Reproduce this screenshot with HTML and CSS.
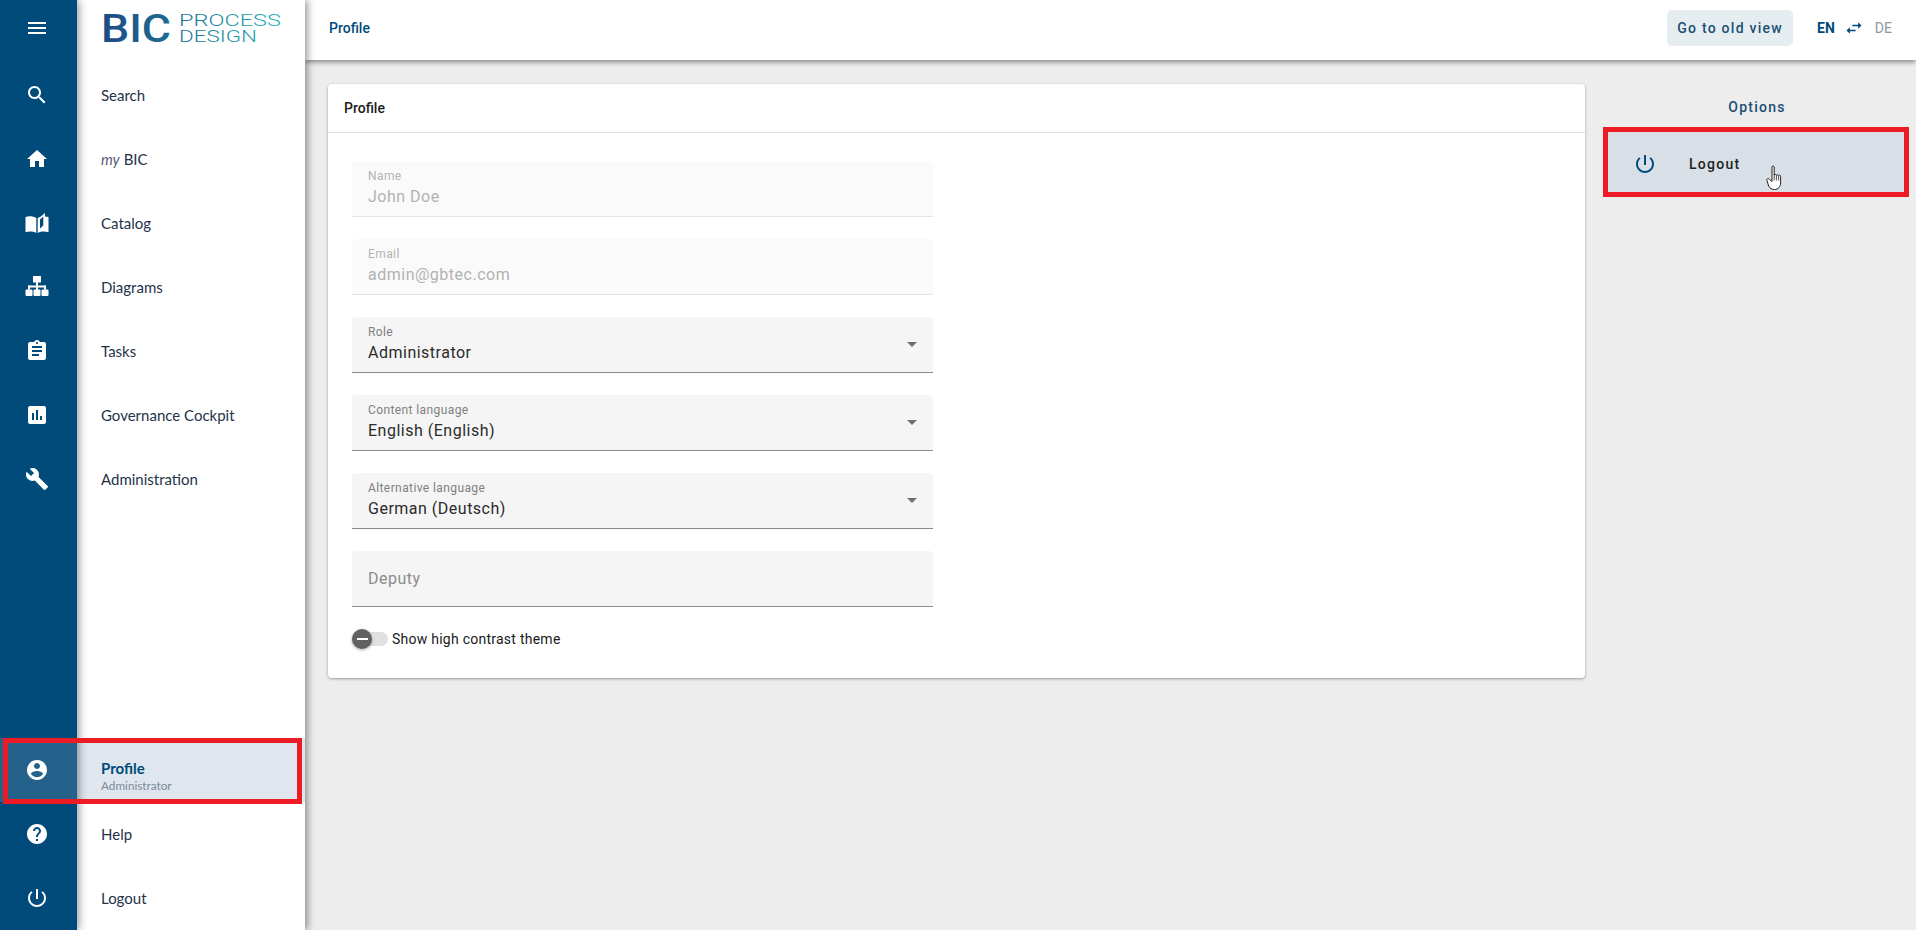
FILE: index.html
```html
<!DOCTYPE html>
<html lang="en">
<head>
<meta charset="utf-8">
<title>Profile</title>
<link rel="stylesheet" href="styles.css">
</head>
<body>
<div class="app">
  <aside class="sidebar">
    <nav class="rail">
      <div class="rail-top"><svg class="ico" viewBox="0 0 24 24"><path d="M3 18h18v-2H3v2zm0-5h18v-2H3v2zm0-7v2h18V6H3z"/></svg></div>
      <div class="rail-cell"><svg class="ico" viewBox="0 0 24 24"><path d="M15.500 14h-.79l-.28-.27C15.410 12.590 16 11.110 16 9.500 16 5.910 13.090 3 9.500 3S3 5.910 3 9.500 5.910 16 9.500 16c1.610 0 3.090-.59 4.230-1.570l.27.28v.79l5 4.990L20.490 19l-4.990-5zm-6 0C7.010 14 5 11.990 5 9.500S7.010 5 9.500 5 14 7.010 14 9.500 11.990 14 9.500 14z"/></svg></div>
      <div class="rail-cell"><svg class="ico" viewBox="0 0 24 24"><path d="M10 20v-6h4v6h5v-8h3L12 3 2 12h3v8z"/></svg></div>
      <div class="rail-cell"><svg class="ico" viewBox="0 0 24 24"><path d="M0.500 6C3.500 5 8 5 11.300 7V22C8 20.300 3.500 20.300 0.500 21.300V6Z"/><path fill-rule="evenodd" d="M12.700 7C13.500 6.400 14.800 6 15.500 5.700L20 2V5.400C21.200 5.400 22.300 5.600 23.500 6V21.300C20 20.300 16 20.300 12.700 22V7ZM15 17.500L18.300 14.500V5.500L15 8.500V17.500Z"/></svg></div>
      <div class="rail-cell"><svg class="ico" viewBox="0 0 24 24"><rect x="8" y="1" width="8" height="6.500" rx=".5"/><rect x="11" y="7" width="2" height="8"/><rect x="3" y="10.500" width="18" height="2"/><rect x="3" y="10.500" width="2" height="4"/><rect x="19" y="10.500" width="2" height="4"/><rect x="0.500" y="14.500" width="7" height="6.500" rx="1"/><rect x="8.500" y="14.500" width="7" height="6.500" rx="1"/><rect x="16.500" y="14.500" width="7" height="6.500" rx="1"/></svg></div>
      <div class="rail-cell"><svg class="ico" viewBox="0 0 24 24"><path d="M19 3h-4.180C14.400 1.840 13.300 1 12 1c-1.300 0-2.400.84-2.820 2H5c-1.100 0-2 .9-2 2v14c0 1.100.9 2 2 2h14c1.100 0 2-.9 2-2V5c0-1.100-.9-2-2-2zm-7 0c.55 0 1 .45 1 1s-.45 1-1 1-1-.45-1-1 .45-1 1-1zm2 14H7v-2h7v2zm3-4H7v-2h10v2zm0-4H7V7h10v2z"/></svg></div>
      <div class="rail-cell"><svg class="ico" viewBox="0 0 24 24"><path d="M19 3H5c-1.100 0-2 .9-2 2v14c0 1.100.9 2 2 2h14c1.100 0 2-.9 2-2V5c0-1.100-.9-2-2-2zM9 17H7v-7h2v7zm4 0h-2V7h2v10zm4 0h-2v-4h2v4z"/></svg></div>
      <div class="rail-cell"><svg class="ico" viewBox="0 0 24 24"><path d="M22.700 19l-9.100-9.100c.9-2.300.4-5-1.500-6.900-2-2-5-2.400-7.400-1.300L9 6 6 9 1.600 4.700C.4 7.100.9 10.100 2.900 12.100c1.900 1.900 4.600 2.400 6.900 1.500l9.100 9.100c.4.4 1 .4 1.400 0l2.300-2.300c.5-.4.5-1.100.1-1.400z"/></svg></div>
      <div class="grow"></div>
      <div class="rail-cell is-active"><svg class="ico" viewBox="0 0 24 24"><path d="M12 2C6.480 2 2 6.480 2 12s4.480 10 10 10 10-4.480 10-10S17.520 2 12 2zm0 3c1.660 0 3 1.340 3 3s-1.340 3-3 3-3-1.340-3-3 1.340-3 3-3zm0 14.200c-2.500 0-4.710-1.280-6-3.220.03-1.990 4-3.080 6-3.080 1.990 0 5.970 1.090 6 3.080-1.290 1.940-3.500 3.220-6 3.220z"/></svg></div>
      <div class="rail-cell"><svg class="ico" viewBox="0 0 24 24"><path d="M12 2C6.480 2 2 6.480 2 12s4.480 10 10 10 10-4.480 10-10S17.520 2 12 2zm1 17h-2v-2h2v2zm2.070-7.750l-.9.92C13.450 12.900 13 13.500 13 15h-2v-.5c0-1.100.45-2.100 1.170-2.830l1.240-1.260c.37-.36.59-.86.59-1.410 0-1.100-.9-2-2-2s-2 .9-2 2H8c0-2.210 1.790-4 4-4s4 1.790 4 4c0 .88-.36 1.680-.93 2.250z"/></svg></div>
      <div class="rail-cell"><svg class="ico" viewBox="0 0 24 24"><path d="M13 3h-2v10h2V3zm4.830 2.170l-1.420 1.420C17.990 7.860 19 9.810 19 12c0 3.870-3.130 7-7 7s-7-3.130-7-7c0-2.190 1.010-4.140 2.580-5.420L6.170 5.170C4.230 6.820 3 9.260 3 12c0 4.970 4.030 9 9 9s9-4.030 9-9c0-2.740-1.230-5.180-3.170-6.830z"/></svg></div>
    </nav>
    <nav class="panel">
      <div class="brand">
        <svg class="logo" viewBox="0 0 190 46" role="img" aria-label="BIC Process Design">
          <defs>
            <linearGradient id="lg" gradientUnits="userSpaceOnUse" x1="0" y1="0" x2="180" y2="0">
              <stop offset="0" stop-color="#1d4a85"/>
              <stop offset=".4" stop-color="#1b6e93"/>
              <stop offset="1" stop-color="#1fb2b4"/>
            </linearGradient>
          </defs>
          <text x="0" y="36" class="logo-big" fill="url(#lg)" textLength="70" lengthAdjust="spacingAndGlyphs">BIC</text>
          <text x="78" y="20" class="logo-small" fill="url(#lg)" textLength="102" lengthAdjust="spacingAndGlyphs">PROCESS</text>
          <text x="78" y="36" class="logo-small" fill="url(#lg)" textLength="78" lengthAdjust="spacingAndGlyphs">DESIGN</text>
        </svg>
      </div>
      <a class="item">Search</a>
      <a class="item item-my"><i class="my">my</i>&nbsp;BIC</a>
      <a class="item">Catalog</a>
      <a class="item">Diagrams</a>
      <a class="item">Tasks</a>
      <a class="item">Governance Cockpit</a>
      <a class="item">Administration</a>
      <div class="grow"></div>
      <a class="item is-active"><span class="item-title">Profile</span><span class="item-sub">Administrator</span></a>
      <a class="item">Help</a>
      <a class="item">Logout</a>
    </nav>
    <div class="mark mark-profile"></div>
  </aside>

  <div class="content">
    <header class="topbar">
      <div class="crumb">Profile</div>
      <div class="top-actions">
        <button class="old-view">Go to old view</button>
        <div class="lang">
          <span class="lang-on">EN</span>
          <svg class="swap" viewBox="0 0 24 24"><path d="M6.990 11L3 15l3.990 4v-3H14v-2H6.990v-3zM21 9l-3.990-4v3H10v2h7.010v3L21 9z"/></svg>
          <span class="lang-off">DE</span>
        </div>
      </div>
    </header>

    <main class="main">
      <section class="card">
        <h2 class="card-head">Profile</h2>
        <form class="form">
          <div class="field is-disabled"><span class="f-label">Name</span><span class="f-value">John Doe</span></div>
          <div class="field is-disabled"><span class="f-label">Email</span><span class="f-value">admin@gbtec.com</span></div>
          <div class="field"><span class="f-label">Role</span><span class="f-value">Administrator</span><svg class="caret" viewBox="0 0 10 5"><path d="M0 0l5 5 5-5z"/></svg></div>
          <div class="field"><span class="f-label">Content language</span><span class="f-value">English (English)</span><svg class="caret" viewBox="0 0 10 5"><path d="M0 0l5 5 5-5z"/></svg></div>
          <div class="field"><span class="f-label">Alternative language</span><span class="f-value">German (Deutsch)</span><svg class="caret" viewBox="0 0 10 5"><path d="M0 0l5 5 5-5z"/></svg></div>
          <div class="field is-empty"><span class="f-placeholder">Deputy</span></div>
          <div class="toggle-row">
            <span class="toggle"><span class="thumb"><span class="thumb-bar"></span></span></span>
            <span class="toggle-label">Show high contrast theme</span>
          </div>
        </form>
      </section>

      <aside class="options">
        <div class="options-title">Options</div>
        <div class="option">
          <svg class="opt-ico" viewBox="0 0 24 24"><path d="M13 3h-2v10h2V3zm4.830 2.170l-1.420 1.420C17.990 7.860 19 9.810 19 12c0 3.870-3.130 7-7 7s-7-3.130-7-7c0-2.190 1.010-4.140 2.580-5.420L6.170 5.170C4.230 6.820 3 9.260 3 12c0 4.970 4.030 9 9 9s9-4.030 9-9c0-2.740-1.230-5.180-3.170-6.830z"/></svg>
          <span class="opt-label">Logout</span>
          <svg class="cursor" viewBox="0 0 18 25"><path d="M6 2c0-1.300 2.200-1.300 2.200 0v8c.4-.8 2-.8 2.200.2.400-.8 2-.6 2.200.4.500-.7 2-.4 2 .7V18c0 3.500-2.500 6.500-6 6.500-3 0-4.700-1.200-6-3.500L1 15.500c-.8-1.500 1-2.700 2.200-1.400L6 16.500z" fill="#fff" stroke="#222" stroke-width="1"/><path d="M8.200 9.500v6M10.400 10v5.500M12.600 10.500v5" stroke="#222" stroke-width=".8" fill="none"/></svg>
        </div>
      </aside>
    </main>
  </div>
</div>
</body>
</html>
```

FILE: styles.css
```css
* { box-sizing: border-box; }
html, body { margin: 0; height: 100%; }
body { font-family: Roboto, "Liberation Sans", sans-serif; background: #ededed; overflow: hidden; }
.app { display: flex; height: 930px; }
.grow { flex: 1; }

.sidebar { position: relative; z-index: 3; display: flex; width: 305px; flex: none; box-shadow: 2px 0 8px rgba(0,0,0,.45); }
.rail { position: relative; z-index: 2; display: flex; flex-direction: column; width: 77px; flex: none; background: #004b7a; box-shadow: 2px 0 8px rgba(0,0,0,.4); }
.rail-top { display: flex; align-items: center; justify-content: center; height: 63px; padding: 0 3px 7px 0; }
.rail-cell { display: flex; align-items: center; justify-content: center; height: 64px; padding-right: 3px; }
.rail-cell.is-active { background: #24618b; }
.ico { width: 24px; height: 24px; fill: #fff; display: block; }

.panel { display: flex; flex-direction: column; flex: 1; background: #fff; }
.brand { height: 63px; padding: 6px 0 0 24px; }
.logo { display: block; width: 190px; height: 46px; }
.logo-big { font-family: Roboto, sans-serif; font-weight: 500; font-size: 39px; }
.logo-small { font-family: Roboto, sans-serif; font-weight: 300; font-size: 16.500px; }
.item { display: flex; flex-direction: column; justify-content: center; height: 64px; padding-left: 24px; font-family: Lato, sans-serif; font-size: 15px; color: #26324a; }
.item-my { flex-direction: row; justify-content: flex-start; align-items: center; }
.my { color: #555f73; }
.item.is-active { padding-top: 12px; background: #dfe6ed; }
.item-title { font-weight: 700; color: #004b7a; line-height: 19px; }
.item-sub { font-size: 11.750px; color: #7b8a99; line-height: 15px; }

.mark { border: 5px solid #ed1c24; }
.mark-profile { position: absolute; left: 3px; bottom: 126px; width: 299px; height: 66px; z-index: 3; }

.content { flex: 1; display: flex; flex-direction: column; min-width: 0; }
.topbar { position: relative; z-index: 2; display: flex; align-items: center; justify-content: space-between; height: 60px; padding: 0 24px 4px; background: #fff; box-shadow: 0 2px 5px rgba(0,0,0,.45); flex: none; }
.crumb { font-size: 14px; font-weight: 500; color: #004b7a; }
.top-actions { display: flex; align-items: center; }
.old-view { width: 126px; height: 36px; border: 0; border-radius: 5px; background: #e6edf1; font: 500 14px Roboto, sans-serif; letter-spacing: 1.250px; color: #1b4f74; padding: 0; }
.lang { display: flex; align-items: center; margin-left: 24px; font-size: 14px; }
.lang-on { font-weight: 700; color: #004b7a; }
.swap { width: 20px; height: 20px; fill: #004b7a; margin-left: 9px; }
.lang-off { margin-left: 11px; color: #8d99a5; }

.main { display: flex; align-items: flex-start; padding: 24px 7px 0 23px; }
.card { flex: 1; height: 594px; background: #fff; border-radius: 4px; box-shadow: 0 1px 3px rgba(0,0,0,.35); }
.card-head { margin: 0; height: 49px; padding: 0 16px; border-bottom: 1px solid #e2e2e2; font-size: 14px; font-weight: 500; line-height: 48px; color: #1c1c1c; }
.form { display: flex; flex-direction: column; gap: 22px; padding: 28px 24px 0; }
.field { position: relative; display: flex; flex-direction: column; width: 581px; height: 56px; padding: 7px 16px 0; background: #f5f5f5; border-bottom: 1px solid #8a8a8a; border-radius: 4px 4px 0 0; }
.f-label { font-size: 12px; line-height: 16px; letter-spacing: .4px; color: #7f7f7f; }
.f-value { margin-top: 1px; font-size: 16px; line-height: 24px; letter-spacing: .5px; color: #2b2b2b; }
.field.is-disabled { background: #fafafa; border-bottom-color: #e4e4e4; }
.is-disabled .f-label, .is-disabled .f-value { color: #b2b2b2; }
.is-empty { justify-content: center; padding: 0 16px; }
.f-placeholder { font-size: 16px; letter-spacing: .5px; color: #8c8c8c; }
.caret { position: absolute; right: 16px; top: 25px; width: 10px; height: 5px; fill: #6f6f6f; }
.toggle-row { display: flex; align-items: center; height: 20px; }
.toggle { display: flex; align-items: center; width: 36px; height: 14px; border-radius: 7px; background: #e0e0e0; }
.thumb { display: flex; align-items: center; justify-content: center; width: 20px; height: 20px; flex: none; border-radius: 50%; background: #616161; box-shadow: 0 1px 3px rgba(0,0,0,.35); }
.thumb-bar { width: 11px; height: 2px; background: #fff; }
.toggle-label { margin-left: 4px; font-size: 14px; letter-spacing: .25px; color: #1a1a1a; }

.options { width: 306px; margin-left: 18px; flex: none; }
.options-title { height: 43px; padding: 13px 0 0 2px; font-size: 14px; font-weight: 500; line-height: 20px; letter-spacing: 1.250px; text-align: center; color: #1b4f74; }
.option { position: relative; display: flex; align-items: center; height: 70px; padding: 4px 0 0 25px; background: #d8dfe6; border: 5px solid #ed1c24; }
.opt-ico { width: 24px; height: 24px; fill: #004b7a; flex: none; }
.opt-label { margin-left: 32px; font-size: 14px; font-weight: 500; letter-spacing: 1.250px; color: #222; }
.cursor { position: absolute; left: 158px; top: 33px; width: 18px; height: 25px; }
```
